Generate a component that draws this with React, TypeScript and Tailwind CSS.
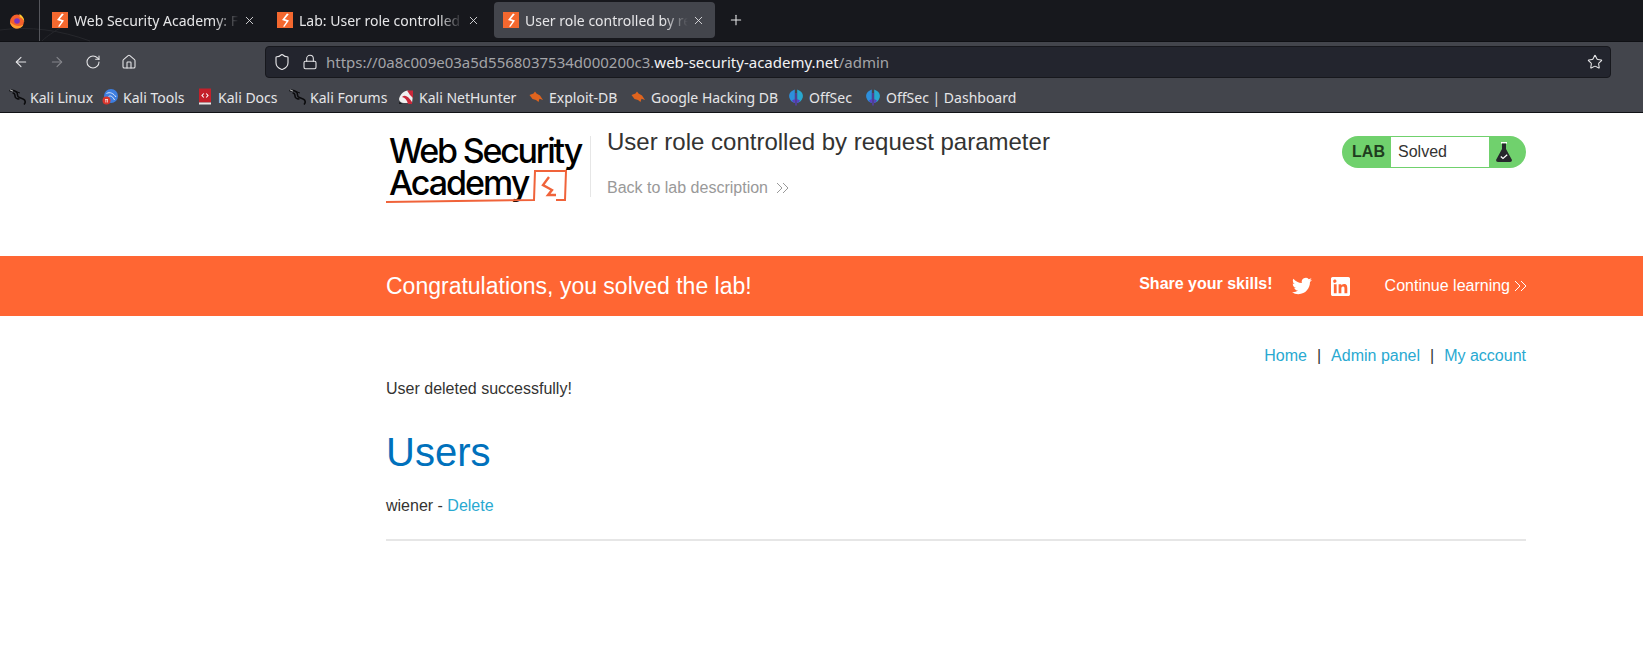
import { ArrowLeft, ArrowRight, Home, Lock, Plus, RotateCw, Shield, Star, X } from "lucide-react";

function Bolt({ className = "h-4 w-4" }: { className?: string }) {
  return (
    <svg viewBox="0 0 16 16" className={className}>
      <rect width="16" height="16" fill="#f4682f" />
      <path d="M10 1.5 L5 8 L9.5 9.5 L6 14.5 L7.5 14.8 L12 8.5 L7.8 7 L11.8 2.2Z" fill="#fff" />
    </svg>
  );
}

function Firefox() {
  return (
    <svg viewBox="0 0 16 16" className="h-4 w-4">
      <circle cx="8" cy="8.6" r="7" fill="#f4602c" />
      <path d="M10 .8 C13.5 2.5 15.5 5.5 15.2 9 C14.8 7 13 4.5 10.5 4 C11 3 10.8 1.8 10 .8Z" fill="#ffc42e" />
      <path d="M1 9 C1.5 13 5 15.6 8 15.6 C11 15.6 13.5 14 14.5 11.5 C12 13.5 6 14 1 9Z" fill="#ffa02e" />
      <circle cx="8" cy="8" r="2.8" fill="#7b35c0" />
    </svg>
  );
}

function KaliDragon() {
  return (
    <svg viewBox="0 0 18 16" className="h-4 w-[18px]" fill="none" stroke="#0b0b0d" strokeWidth="1.6">
      <path d="M0.5 2 C3 0.8 5.5 1.5 7.5 3 C9 4.5 8 6 9 7.5 C10.5 9.5 14 9 15.5 11 C16.5 12.5 16 14.5 15 15.5" />
      <path d="M3.5 4 C5 3.8 6 5 6 7 C6 9 8.5 10 10.5 10" />
      <path d="M7 2.5 L11 4" strokeWidth="1" />
      <path d="M1 1 L4 2" stroke="#d8d8d8" strokeWidth="0.8" />
    </svg>
  );
}

function ToolsIcon() {
  return (
    <svg viewBox="0 0 16 16" className="h-4 w-4">
      <circle cx="9" cy="7" r="7" fill="#3d7ee0" />
      <path d="M4.5 4.5 C8 2.5 11.5 4.5 14 8 M6.5 7.5 C9 6 11 8 12.5 11" fill="none" stroke="#d9e8ff" strokeWidth="1" />
      <circle cx="4.5" cy="11.5" r="4" fill="#d9352c" />
      <path d="M3 10.5 H6 M3.8 10.5 V13.5 M5.4 10.5 V13.5" stroke="#fff" strokeWidth="0.7" />
    </svg>
  );
}

function DocsIcon() {
  return (
    <svg viewBox="0 0 16 18" className="h-[18px] w-4">
      <rect x="2" y="0.5" width="12" height="14" fill="#c4202a" />
      <rect x="2" y="14.5" width="12" height="2" fill="#e8e8e8" />
      <path d="M6.8 5.5 L5 7.5 L6.8 9.5 M9.2 5.5 L11 7.5 L9.2 9.5" fill="none" stroke="#fff" strokeWidth="1.1" />
    </svg>
  );
}

function HunterIcon() {
  return (
    <svg viewBox="0 0 16 16" className="h-4 w-4">
      <path d="M1 10 C2 5 6 2 10 1.5 L15 6 L14 14 L6 14 C3 14 1 12 1 10Z" fill="#f0f0f0" />
      <path d="M9 1.5 L15 1.5 L15 9 L12 6Z" fill="#c9283a" />
      <path d="M4 8 C7 5.5 10 7 14 13 L14 15 L10 15 C9 11 7 8.5 4 8Z" fill="#c9283a" />
      <path d="M1 13 L5 15 L1 15Z" fill="#1b1b1d" />
    </svg>
  );
}

function ExploitIcon() {
  return (
    <svg viewBox="0 0 16 16" className="h-4 w-4">
      <path d="M1.5 6 L5.5 4.5 L7 2.5 L8.5 4.5 L12 6.5 L15 11 L11.5 9.8 L10.5 13 L8 11 L4.5 10Z" fill="#e0641e" />
    </svg>
  );
}

function OffSecIcon() {
  return (
    <svg viewBox="0 0 16 18" className="h-[18px] w-4">
      <path d="M6.8 1.5 C2.5 3 0.5 6 1.3 9.5 C2 12.5 4.5 14.5 6.8 15Z" fill="#2d8fdc" />
      <path d="M9.2 1.5 C13.5 3 15.5 6 14.7 9.5 C14 12.5 11.5 14.5 9.2 15Z" fill="#28a7cf" />
      <path d="M7.4 5 L8.6 5 L8.6 17.5 L7.4 17.5Z" fill="#5b3cc4" />
      <path d="M4 12.5 C5 14 6 14.7 6.8 15 L6.8 11Z" fill="#5b3cc4" />
      <path d="M12 12.5 C11 14 10 14.7 9.2 15 L9.2 11Z" fill="#5b3cc4" />
    </svg>
  );
}

const tabs = [
  { title: "Web Security Academy: Free Online", box: "w-[225px] pr-[12px]" },
  { title: "Lab: User role controlled by request", box: "w-[226px] pr-[14px]" },
  { title: "User role controlled by request", box: "w-[221px] pr-[10px] bg-[#43454c]" },
];

const bookmarks = [
  { label: "Kali Linux", icon: <KaliDragon />, width: "w-[93px]" },
  { label: "Kali Tools", icon: <ToolsIcon />, width: "w-[95px]" },
  { label: "Kali Docs", icon: <DocsIcon />, width: "w-[92px]" },
  { label: "Kali Forums", icon: <KaliDragon />, width: "w-[109px]" },
  { label: "Kali NetHunter", icon: <HunterIcon />, width: "w-[130px]" },
  { label: "Exploit-DB", icon: <ExploitIcon />, width: "w-[102px]" },
  { label: "Google Hacking DB", icon: <ExploitIcon />, width: "w-[158px]" },
  { label: "OffSec", icon: <OffSecIcon />, width: "w-[77px]" },
  { label: "OffSec | Dashboard", icon: <OffSecIcon />, width: "w-auto" },
];

function BrowserChrome() {
  return (
    <div className="font-['Noto_Sans',sans-serif] text-[14px] text-[#e6e6e8]">
      <div className="relative flex h-[42px] items-start border-b border-[#0f1014] bg-[#17181d]">
        {/* faint wallpaper curves behind the tab strip */}
        <svg viewBox="0 0 300 42" className="absolute left-0 top-0 h-[42px] w-[300px]" fill="none" stroke="#26272c">
          <path d="M0 30 C30 26 60 30 90 41" />
          <path d="M60 28 C50 34 45 38 42 41" />
        </svg>
        <div className="relative flex h-[41px] w-10 items-center border-r border-[#55565c] pl-[9px]">
          <Firefox />
        </div>
        <div className="relative flex pt-[2px] pl-[3px]">
          {tabs.map((t) => (
            <div key={t.title} className={`flex h-9 items-center rounded pl-[9px] ${t.box}`}>
              <Bolt className="h-4 w-4 shrink-0" />
              <span className="ml-[6px] min-w-0 flex-1 overflow-hidden whitespace-nowrap [mask-image:linear-gradient(to_right,black_85%,transparent)]">
                {t.title}
              </span>
              <X className="ml-1 h-[13px] w-[13px] shrink-0" strokeWidth={1.6} />
            </div>
          ))}
        </div>
        <Plus className="relative mt-[12px] ml-[13px] h-4 w-4" strokeWidth={1.6} />
      </div>
      <div className="flex h-10 items-center bg-[#43454c] pl-[13px] pr-8">
        <ArrowLeft className="h-4 w-4" strokeWidth={1.6} />
        <ArrowRight className="ml-5 h-4 w-4 text-[#85868b]" strokeWidth={1.6} />
        <RotateCw className="ml-5 h-4 w-4" strokeWidth={1.6} />
        <Home className="ml-5 h-4 w-4" strokeWidth={1.6} />
        <div className="ml-[128px] flex h-8 flex-1 items-center rounded border border-[#17181d] bg-[#23252e] pl-[7px] pr-[7px]">
          <Shield className="h-[18px] w-[18px]" strokeWidth={1.5} />
          <Lock className="ml-[11px] h-4 w-4" strokeWidth={1.6} />
          <span className="pl-[8px] text-[15px] text-[#a3a4a8]">
            https://0a8c009e03a5d5568037534d000200c3.<span className="text-[#f2f2f3]">web-security-academy.net</span>/admin
          </span>
          <Star className="ml-auto h-4 w-4" strokeWidth={1.6} />
        </div>
      </div>
      <div className="flex h-[31px] items-center border-b border-[#111216] bg-[#43454c] pl-[9px]">
        {bookmarks.map((b) => (
          <div key={b.label} className={`flex items-center ${b.width}`}>
            <span className="flex w-[21px] shrink-0">{b.icon}</span>
            <span className="whitespace-nowrap">{b.label}</span>
          </div>
        ))}
      </div>
    </div>
  );
}

function Logo() {
  return (
    <div className="relative h-[72px] w-[200px] font-['Inter',sans-serif] font-[550] leading-none text-black">
      <div className="absolute left-[3px] top-[1px] whitespace-nowrap text-[34px] tracking-[-2.2px]">Web Security</div>
      <div className="absolute left-[3px] top-[33px] whitespace-nowrap text-[34px] tracking-[-2px]">Academy</div>
      <svg viewBox="0 0 200 72" className="absolute inset-0 h-[72px] w-[200px]" fill="none" stroke="#f0633a">
        <path d="M0 69 C50 68 100 68 148 67 L149 38 L180 38 L179 67 L170 67" strokeWidth="2" />
        <path d="M163 44 L157 52 L166 57 L162 62 L170 62" strokeWidth="2.4" />
      </svg>
    </div>
  );
}

function Flask() {
  return (
    <svg viewBox="0 0 16 20" className="h-5 w-4">
      <rect x="5" y="0" width="6" height="1.6" fill="#fff" />
      <path d="M6 1.6 L10 1.6 L10 7 L16 18 Q16 20 14 20 L2 20 Q0 20 0 18 L6 7Z" fill="#26282c" />
      <path d="M4.8 14.5 L7 16.5 L11.2 12.8" fill="none" stroke="#fff" strokeWidth="1.2" />
    </svg>
  );
}

function Twitter() {
  return (
    <svg viewBox="0 0 24 24" className="h-5 w-5" fill="#fff">
      <path d="M23.95 4.57a10 10 0 0 1-2.82.77 4.96 4.96 0 0 0 2.16-2.72 9.9 9.9 0 0 1-3.12 1.19 4.92 4.92 0 0 0-8.38 4.48A13.98 13.98 0 0 1 1.64 3.16a4.82 4.82 0 0 0-.67 2.48 4.92 4.92 0 0 0 2.19 4.1 4.9 4.9 0 0 1-2.23-.62v.06a4.92 4.92 0 0 0 3.95 4.83 5 5 0 0 1-2.21.08 4.94 4.94 0 0 0 4.6 3.42A9.87 9.87 0 0 1 0 19.54a13.94 13.94 0 0 0 7.55 2.21c9.05 0 14-7.5 14-13.98 0-.21 0-.42-.02-.63a9.94 9.94 0 0 0 2.46-2.55z" />
    </svg>
  );
}

function LinkedIn() {
  return (
    <svg viewBox="0 0 24 24" className="h-[19px] w-[19px]" fill="#fff">
      <path d="M22 0H2C1 0 0 1 0 2v20c0 1 1 2 2 2h20c1 0 2-1 2-2V2c0-1-1-2-2-2zM7.1 20.5H3.6V9h3.5v11.5zM5.3 7.4a2.1 2.1 0 1 1 0-4.1 2.1 2.1 0 0 1 0 4.1zm15.2 13.1H17v-5.6c0-1.3 0-3-1.8-3s-2.1 1.4-2.1 2.9v5.7H9.6V9h3.4v1.6c.5-.9 1.6-1.9 3.4-1.9 3.6 0 4.2 2.4 4.2 5.5v6.3z" />
    </svg>
  );
}

function Chevrons({ className = "" }: { className?: string }) {
  return (
    <svg viewBox="0 0 14 12" className={`h-3 w-[14px] ${className}`} fill="none" stroke="currentColor" strokeWidth="1">
      <path d="M1 1 L6 6 L1 11 M7 1 L12 6 L7 11" />
    </svg>
  );
}

function LabHeader() {
  return (
    <div className="ml-[386px] flex h-[143px] w-[1140px] items-start pt-5">
      <Logo />
      <div className="mt-[3px] ml-[4px] h-[61px] border-l border-[#e6e6e6]" />
      <div className="-mt-[5px] ml-4 flex-1">
        <h2 className="text-[24px] leading-[28px] text-[#333332]">User role controlled by request parameter</h2>
        <a className="mt-[23px] flex items-center gap-2 text-[16px] leading-[18px] text-[#999]">
          Back to lab description <Chevrons />
        </a>
      </div>
      <div className="mt-[3px] flex h-8 w-[184px] overflow-hidden rounded-full bg-[#70d16d] text-[16px]">
        <span className="flex w-[49px] items-center justify-center pl-1 font-bold text-[#1f3d1e]">LAB</span>
        <span className="my-px flex flex-1 items-center bg-white pl-[7px] text-[#333332]">Solved</span>
        <span className="flex w-[37px] items-center pl-[7px]">
          <Flask />
        </span>
      </div>
    </div>
  );
}

function SolvedBanner() {
  return (
    <div className="h-[60px] bg-[#ff6633] text-white">
      <div className="ml-[386px] flex h-full w-[1140px] items-center">
        <h4 className="text-[23px]">Congratulations, you solved the lab!</h4>
        <div className="ml-auto flex items-center">
          <span className="-mt-1 text-[16px] font-bold">Share your skills!</span>
          <span className="ml-[19px]"><Twitter /></span>
          <span className="ml-[19px]"><LinkedIn /></span>
          <a className="ml-[35px] flex items-center gap-[2px] text-[16px]">
            Continue learning <Chevrons className="-mr-[2px] ml-[2px]" />
          </a>
        </div>
      </div>
    </div>
  );
}

function Content() {
  return (
    <div className="ml-[386px] w-[1140px] text-[16px] text-[#333332]">
      <div className="flex justify-end gap-[10px] pt-[31px] leading-[18px]">
        <a className="text-[#29a9d1]">Home</a>
        <span>|</span>
        <a className="text-[#29a9d1]">Admin panel</a>
        <span>|</span>
        <a className="text-[#29a9d1]">My account</a>
      </div>
      <p className="mt-[15px] leading-[18px]">User deleted successfully!</p>
      <h1 className="mt-[31px] text-[40px] leading-[46px] text-[#0071bc]">Users</h1>
      <div className="mt-[22px] leading-[18px]">
        wiener - <a className="text-[#29a9d1]">Delete</a>
      </div>
      <hr className="mt-[24px] border-t-2 border-[#e6e6e6]" />
    </div>
  );
}

export default function App() {
  return (
    <div className="h-[652px] overflow-hidden bg-white font-['Liberation_Sans',Arial,sans-serif]">
      <BrowserChrome />
      <LabHeader />
      <SolvedBanner />
      <Content />
    </div>
  );
}
